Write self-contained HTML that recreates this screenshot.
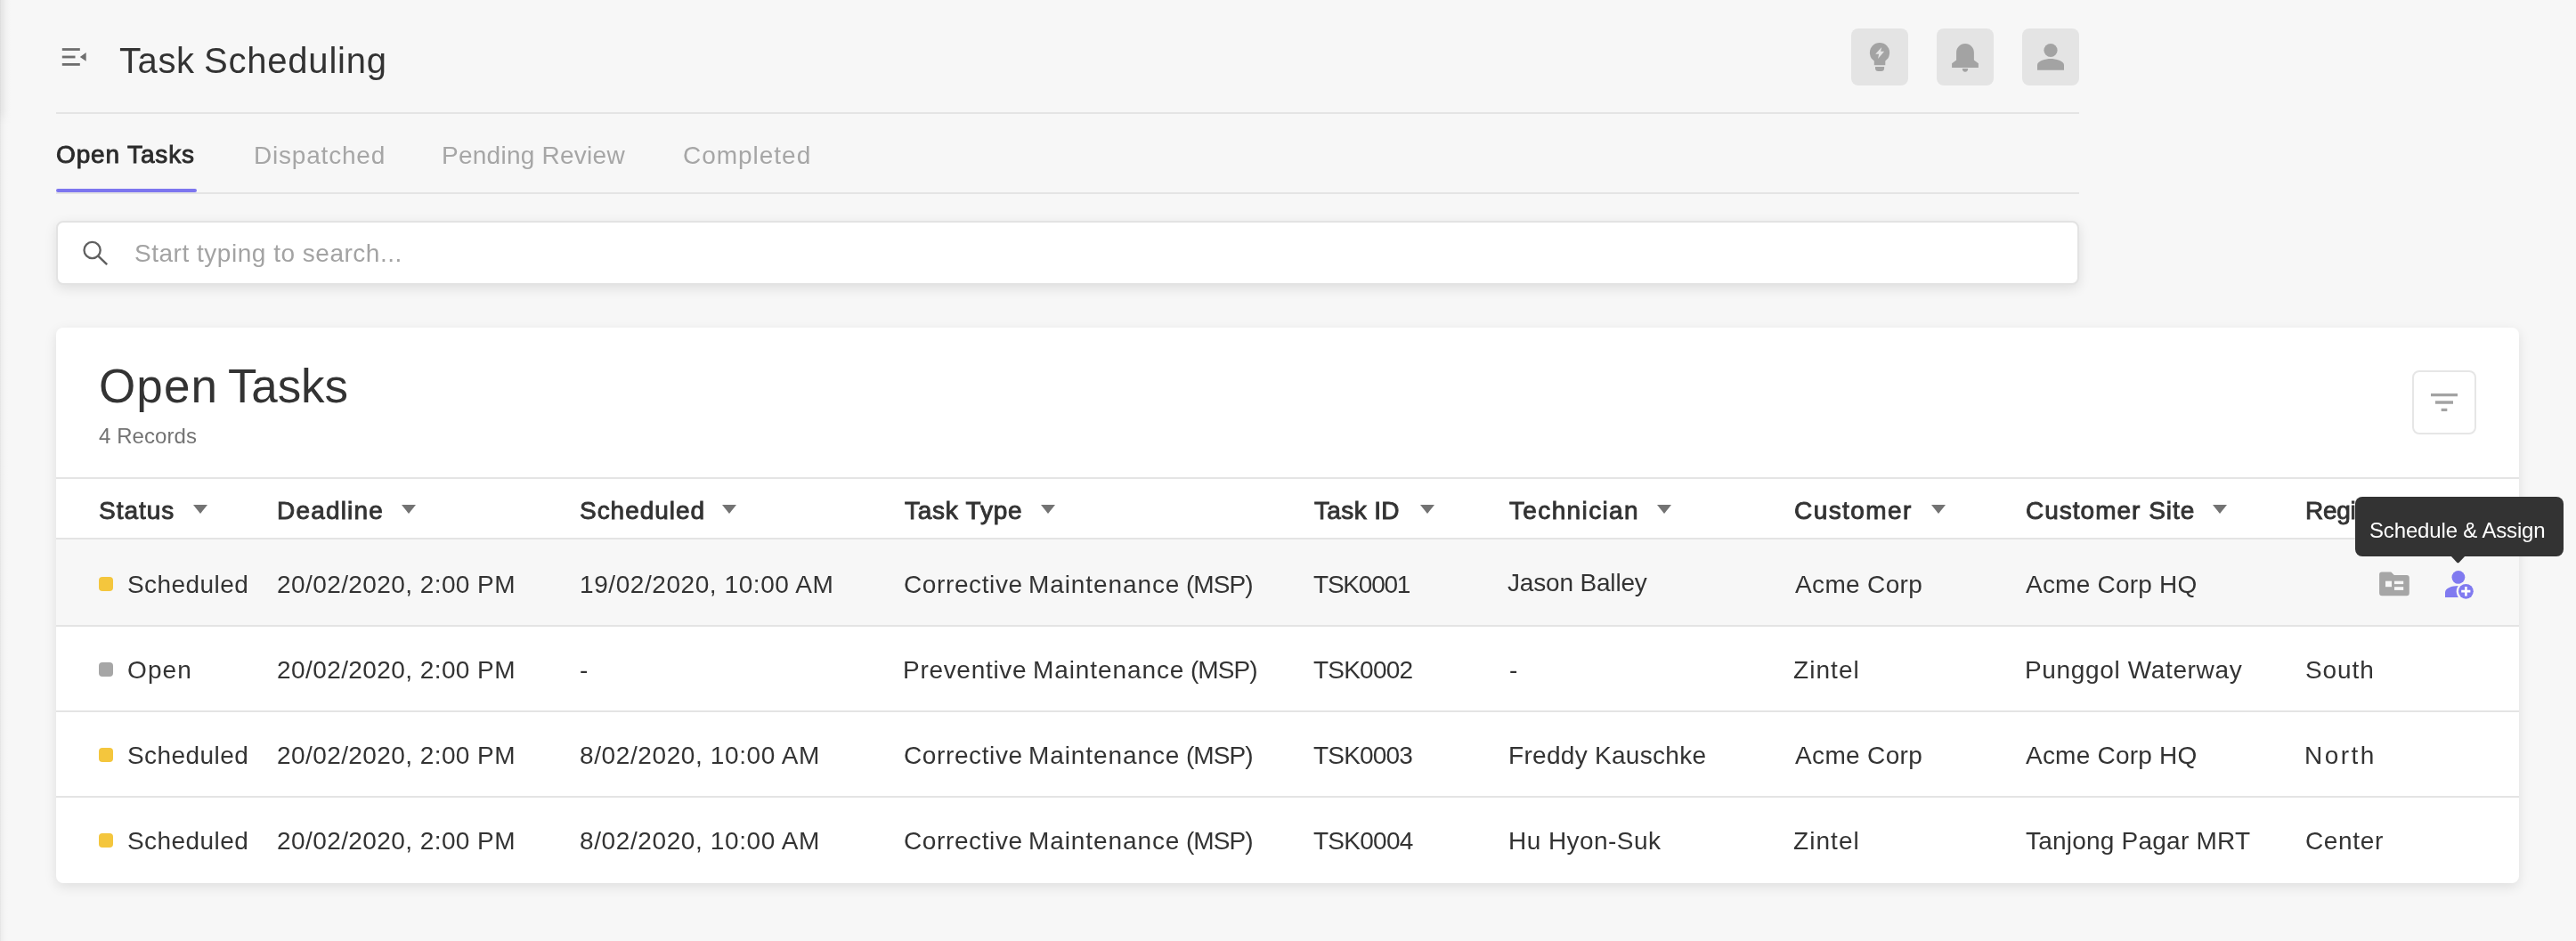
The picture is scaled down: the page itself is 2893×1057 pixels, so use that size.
<!DOCTYPE html>
<html><head><meta charset="utf-8"><title>Task Scheduling</title>
<style>
html,body{margin:0;padding:0}
body{width:2893px;height:1057px;background:#f7f7f7;position:relative;overflow:hidden;font-family:"Liberation Sans",sans-serif;color:#333}
.a{position:absolute;display:block}
.t{position:absolute;white-space:pre;display:block;will-change:transform}
.ib{position:absolute;top:32px;width:64px;height:64px;border-radius:8px;background:#e4e4e4}
.hl{position:absolute;left:63px;width:2272px;height:2px;background:#e4e4e4}
.rl{position:absolute;left:0;width:2766px;height:2px;background:#e4e4e4}
</style></head><body>

<div class="a" style="left:0;top:0;width:12px;height:1057px;background:linear-gradient(to right,#e3e3e3 0,#eeeeee 1.5px,#f2f2f2 4px,#f5f5f5 6px,#f7f7f7 9px)"></div>
<div class="a" style="left:0;top:0;width:12px;height:140px;background:linear-gradient(to right,#dbdbdb 0,#e6e6e6 1.5px,#eaeaea 4px,#f0f0f0 6px,#f4f4f4 9px,#f7f7f7 12px);-webkit-mask-image:linear-gradient(to bottom,#000 0,#000 124px,transparent 139px);mask-image:linear-gradient(to bottom,#000 0,#000 124px,transparent 139px)"></div>
<svg class="a" style="left:60px;top:44px" width="48" height="40" viewBox="60 44 48 40"><g fill="#6e6e6e"><rect x="69.8" y="54.1" width="20" height="2.8"/><rect x="69.8" y="62.6" width="14.7" height="2.8"/><rect x="69.8" y="71" width="20" height="2.8"/><path d="M96.7 59.1V68.7L89.8 63.9Z"/></g></svg>
<div class="ib" style="left:2079px"></div><div class="ib" style="left:2175px"></div><div class="ib" style="left:2271px"></div>
<svg class="a" style="left:2079px;top:32px" width="256" height="64" viewBox="2079 32 256 64">
 <g fill="#a3a3a3">
  <circle cx="2111" cy="59.2" r="11.1"/>
  <rect x="2104.8" y="62" width="12.5" height="11.2"/>
  <path d="M2106 75.1H2116.1V76.5A3.5 3.5 0 0 1 2112.6 80H2109.5A3.5 3.5 0 0 1 2106 76.5Z"/>
  <path d="M2207 48.9C2212.6 48.9 2216.9 53.3 2216.9 59V67.5L2221.9 71.2V75.9H2192.1V71.2L2197.1 67.5V59C2197.1 53.3 2201.4 48.9 2207 48.9Z"/>
  <path d="M2203.8 77.1H2210.2A3.2 3.7 0 0 1 2203.8 77.1Z"/>
  <circle cx="2303" cy="56.5" r="7.6"/>
  <path d="M2288 78.8V73C2288 68.3 2297.5 66 2303 66S2318 68.3 2318 73V78.8Z"/>
 </g>
 <path d="M2113.2 53L2106.2 60.8H2110.1L2109.1 66L2116.1 57.8H2112.1Z" fill="#e4e4e4"/>
</svg>
<div class="hl" style="top:126px"></div>
<div class="hl" style="top:216px"></div>
<div class="a" style="left:63px;top:212px;width:158px;height:4px;border-radius:2px;background:#7d76ef"></div>
<div class="a" style="left:63px;top:248px;width:2268px;height:68px;border:2px solid #e3e3e3;border-radius:8px;background:#fff;box-shadow:0 4px 14px rgba(0,0,0,0.1)"></div>
<svg class="a" style="left:90px;top:268px" width="34" height="34" viewBox="90 268 34 34"><circle cx="103.6" cy="281" r="9.1" fill="none" stroke="#606060" stroke-width="2.3"/><path d="M110.3 287.7L120.2 297.2" stroke="#606060" stroke-width="2.5" stroke-linecap="butt"/></svg>

<div class="a" id="card" style="left:63px;top:368px;width:2766px;height:624px;border-radius:8px;background:#fff;box-shadow:0 4px 14px rgba(0,0,0,0.1)">
 <div class="rl" style="top:168px"></div>
 <div class="rl" style="top:236px"></div>
 <div class="a" style="left:0;top:238px;width:2766px;height:96px;background:#f7f7f7"></div>
 <div class="rl" style="top:334px"></div>
 <div class="rl" style="top:430px"></div>
 <div class="rl" style="top:526px"></div>
 <div class="a" style="left:2646px;top:48px;width:68px;height:68px;border:2px solid #e6e6e6;border-radius:8px;background:#fff"></div>
 <svg class="a" style="left:2662px;top:64px" width="40" height="40" viewBox="0 0 24 24"><path d="M10 18h4v-2h-4v2zM3 6v2h18V6H3zm3 7h12v-2H6v2z" fill="#a3a3a3"/></svg>
</div>
<svg class="a" style="left:217px;top:567px" width="16" height="10" viewBox="0 0 16 10"><path d="M0 0H16L8 10Z" fill="#737373"/></svg><svg class="a" style="left:451.3px;top:567px" width="16" height="10" viewBox="0 0 16 10"><path d="M0 0H16L8 10Z" fill="#737373"/></svg><svg class="a" style="left:811.2px;top:567px" width="16" height="10" viewBox="0 0 16 10"><path d="M0 0H16L8 10Z" fill="#737373"/></svg><svg class="a" style="left:1169px;top:567px" width="16" height="10" viewBox="0 0 16 10"><path d="M0 0H16L8 10Z" fill="#737373"/></svg><svg class="a" style="left:1595px;top:567px" width="16" height="10" viewBox="0 0 16 10"><path d="M0 0H16L8 10Z" fill="#737373"/></svg><svg class="a" style="left:1861.4px;top:567px" width="16" height="10" viewBox="0 0 16 10"><path d="M0 0H16L8 10Z" fill="#737373"/></svg><svg class="a" style="left:2168.8px;top:567px" width="16" height="10" viewBox="0 0 16 10"><path d="M0 0H16L8 10Z" fill="#737373"/></svg><svg class="a" style="left:2485px;top:567px" width="16" height="10" viewBox="0 0 16 10"><path d="M0 0H16L8 10Z" fill="#737373"/></svg><div class="a" style="left:111px;top:648px;width:16px;height:16px;border-radius:4px;background:#f4c63d"></div><div class="a" style="left:111px;top:744px;width:16px;height:16px;border-radius:4px;background:#a6a6a6"></div><div class="a" style="left:111px;top:840px;width:16px;height:16px;border-radius:4px;background:#f4c63d"></div><div class="a" style="left:111px;top:936px;width:16px;height:16px;border-radius:4px;background:#f4c63d"></div><span class="t" style="left:134.2px;top:48.3px;font-size:40px;line-height:40px;letter-spacing:0.600px;color:#333333;">Task</span>
<span class="t" style="left:228.8px;top:48.3px;font-size:40px;line-height:40px;letter-spacing:0.789px;color:#333333;">Scheduling</span>
<span class="t" style="left:63.0px;top:160.2px;font-size:28px;line-height:28px;letter-spacing:0.856px;color:#2b2b2b;-webkit-text-stroke-width:0.9px;">Open Tasks</span>
<span class="t" style="left:284.9px;top:161.2px;font-size:28px;line-height:28px;letter-spacing:0.800px;color:#a6a6a6;">Dispatched</span>
<span class="t" style="left:496.3px;top:161.2px;font-size:28px;line-height:28px;letter-spacing:0.254px;color:#a6a6a6;">Pending Review</span>
<span class="t" style="left:767.0px;top:161.2px;font-size:28px;line-height:28px;letter-spacing:0.975px;color:#a6a6a6;">Completed</span>
<span class="t" style="left:151.1px;top:270.9px;font-size:28px;line-height:28px;letter-spacing:0.517px;color:#a3a3a3;">Start typing to search...</span>
<span class="t" style="left:110.8px;top:407.3px;font-size:53px;line-height:53px;letter-spacing:1.100px;color:#333333;">Open</span>
<span class="t" style="left:256.1px;top:407.3px;font-size:53px;line-height:53px;letter-spacing:-0.150px;color:#333333;">Tasks</span>
<span class="t" style="left:111.0px;top:478.3px;font-size:24px;line-height:24px;letter-spacing:0.075px;color:#737373;">4 Records</span>
<span class="t" style="left:110.7px;top:560.3px;font-size:28px;line-height:28px;letter-spacing:0.960px;color:#333333;-webkit-text-stroke-width:0.9px;">Status</span>
<span class="t" style="left:311.2px;top:560.3px;font-size:28px;line-height:28px;letter-spacing:1.186px;color:#333333;-webkit-text-stroke-width:0.9px;">Deadline</span>
<span class="t" style="left:650.5px;top:560.3px;font-size:28px;line-height:28px;letter-spacing:0.963px;color:#333333;-webkit-text-stroke-width:0.9px;">Scheduled</span>
<span class="t" style="left:1016.0px;top:560.3px;font-size:28px;line-height:28px;letter-spacing:0.750px;color:#333333;-webkit-text-stroke-width:0.9px;">Task Type</span>
<span class="t" style="left:1475.8px;top:560.3px;font-size:28px;line-height:28px;letter-spacing:0.367px;color:#333333;-webkit-text-stroke-width:0.9px;">Task ID</span>
<span class="t" style="left:1695.4px;top:560.3px;font-size:28px;line-height:28px;letter-spacing:1.367px;color:#333333;-webkit-text-stroke-width:0.9px;">Technician</span>
<span class="t" style="left:2015.0px;top:560.3px;font-size:28px;line-height:28px;letter-spacing:1.429px;color:#333333;-webkit-text-stroke-width:0.9px;">Customer</span>
<span class="t" style="left:2275.0px;top:560.3px;font-size:28px;line-height:28px;letter-spacing:1.000px;color:#333333;-webkit-text-stroke-width:0.9px;">Customer Site</span>
<span class="t" style="left:2589.2px;top:560.3px;font-size:28px;line-height:28px;letter-spacing:-0.267px;color:#333333;-webkit-text-stroke-width:0.9px;">Region</span>
<span class="t" style="left:142.9px;top:643.0px;font-size:28px;line-height:28px;letter-spacing:0.425px;color:#333333;">Scheduled</span>
<span class="t" style="left:310.6px;top:643.0px;font-size:28px;line-height:28px;letter-spacing:0.417px;color:#333333;">20/02/2020, 2:00 PM</span>
<span class="t" style="left:650.9px;top:643.0px;font-size:28px;line-height:28px;letter-spacing:0.568px;color:#333333;">19/02/2020, 10:00 AM</span>
<span class="t" style="left:1014.8px;top:643.0px;font-size:28px;line-height:28px;letter-spacing:0.611px;color:#333333;">Corrective</span>
<span class="t" style="left:1155.2px;top:643.0px;font-size:28px;line-height:28px;letter-spacing:0.910px;color:#333333;">Maintenance</span>
<span class="t" style="left:1331.5px;top:643.0px;font-size:28px;line-height:28px;letter-spacing:-0.950px;color:#333333;">(MSP)</span>
<span class="t" style="left:1475.0px;top:643.0px;font-size:28px;line-height:28px;letter-spacing:-1.217px;color:#333333;">TSK0001</span>
<span class="t" style="left:1692.7px;top:641.0px;font-size:28px;line-height:28px;letter-spacing:-0.173px;color:#333333;">Jason Balley</span>
<span class="t" style="left:2015.5px;top:643.0px;font-size:28px;line-height:28px;letter-spacing:0.350px;color:#333333;">Acme Corp</span>
<span class="t" style="left:2275.4px;top:643.0px;font-size:28px;line-height:28px;letter-spacing:0.218px;color:#333333;">Acme Corp HQ</span>
<span class="t" style="left:143.3px;top:739.0px;font-size:28px;line-height:28px;letter-spacing:1.133px;color:#333333;">Open</span>
<span class="t" style="left:310.6px;top:739.0px;font-size:28px;line-height:28px;letter-spacing:0.417px;color:#333333;">20/02/2020, 2:00 PM</span>
<span class="t" style="left:650.8px;top:739.0px;font-size:28px;line-height:28px;letter-spacing:0.000px;color:#333333;">-</span>
<span class="t" style="left:1014.2px;top:739.0px;font-size:28px;line-height:28px;letter-spacing:0.700px;color:#333333;">Preventive</span>
<span class="t" style="left:1160.4px;top:739.0px;font-size:28px;line-height:28px;letter-spacing:0.910px;color:#333333;">Maintenance</span>
<span class="t" style="left:1336.7px;top:739.0px;font-size:28px;line-height:28px;letter-spacing:-0.950px;color:#333333;">(MSP)</span>
<span class="t" style="left:1475.0px;top:739.0px;font-size:28px;line-height:28px;letter-spacing:-0.783px;color:#333333;">TSK0002</span>
<span class="t" style="left:1694.8px;top:739.0px;font-size:28px;line-height:28px;letter-spacing:0.000px;color:#333333;">-</span>
<span class="t" style="left:2014.4px;top:739.0px;font-size:28px;line-height:28px;letter-spacing:1.060px;color:#333333;">Zintel</span>
<span class="t" style="left:2273.9px;top:739.0px;font-size:28px;line-height:28px;letter-spacing:0.647px;color:#333333;">Punggol Waterway</span>
<span class="t" style="left:2588.5px;top:739.0px;font-size:28px;line-height:28px;letter-spacing:0.925px;color:#333333;">South</span>
<span class="t" style="left:142.9px;top:835.0px;font-size:28px;line-height:28px;letter-spacing:0.425px;color:#333333;">Scheduled</span>
<span class="t" style="left:310.6px;top:835.0px;font-size:28px;line-height:28px;letter-spacing:0.417px;color:#333333;">20/02/2020, 2:00 PM</span>
<span class="t" style="left:650.5px;top:835.0px;font-size:28px;line-height:28px;letter-spacing:0.606px;color:#333333;">8/02/2020, 10:00 AM</span>
<span class="t" style="left:1014.8px;top:835.0px;font-size:28px;line-height:28px;letter-spacing:0.611px;color:#333333;">Corrective</span>
<span class="t" style="left:1155.2px;top:835.0px;font-size:28px;line-height:28px;letter-spacing:0.910px;color:#333333;">Maintenance</span>
<span class="t" style="left:1331.5px;top:835.0px;font-size:28px;line-height:28px;letter-spacing:-0.950px;color:#333333;">(MSP)</span>
<span class="t" style="left:1475.0px;top:835.0px;font-size:28px;line-height:28px;letter-spacing:-0.800px;color:#333333;">TSK0003</span>
<span class="t" style="left:1694.0px;top:835.0px;font-size:28px;line-height:28px;letter-spacing:0.300px;color:#333333;">Freddy Kauschke</span>
<span class="t" style="left:2015.5px;top:835.0px;font-size:28px;line-height:28px;letter-spacing:0.350px;color:#333333;">Acme Corp</span>
<span class="t" style="left:2275.4px;top:835.0px;font-size:28px;line-height:28px;letter-spacing:0.218px;color:#333333;">Acme Corp HQ</span>
<span class="t" style="left:2587.5px;top:835.0px;font-size:28px;line-height:28px;letter-spacing:2.450px;color:#333333;">North</span>
<span class="t" style="left:142.9px;top:931.0px;font-size:28px;line-height:28px;letter-spacing:0.425px;color:#333333;">Scheduled</span>
<span class="t" style="left:310.6px;top:931.0px;font-size:28px;line-height:28px;letter-spacing:0.417px;color:#333333;">20/02/2020, 2:00 PM</span>
<span class="t" style="left:650.5px;top:931.0px;font-size:28px;line-height:28px;letter-spacing:0.606px;color:#333333;">8/02/2020, 10:00 AM</span>
<span class="t" style="left:1014.8px;top:931.0px;font-size:28px;line-height:28px;letter-spacing:0.611px;color:#333333;">Corrective</span>
<span class="t" style="left:1155.2px;top:931.0px;font-size:28px;line-height:28px;letter-spacing:0.910px;color:#333333;">Maintenance</span>
<span class="t" style="left:1331.5px;top:931.0px;font-size:28px;line-height:28px;letter-spacing:-0.950px;color:#333333;">(MSP)</span>
<span class="t" style="left:1475.0px;top:931.0px;font-size:28px;line-height:28px;letter-spacing:-0.733px;color:#333333;">TSK0004</span>
<span class="t" style="left:1694.0px;top:931.0px;font-size:28px;line-height:28px;letter-spacing:0.450px;color:#333333;">Hu Hyon-Suk</span>
<span class="t" style="left:2014.4px;top:931.0px;font-size:28px;line-height:28px;letter-spacing:1.060px;color:#333333;">Zintel</span>
<span class="t" style="left:2275.4px;top:931.0px;font-size:28px;line-height:28px;letter-spacing:0.219px;color:#333333;">Tanjong Pagar MRT</span>
<span class="t" style="left:2588.5px;top:931.0px;font-size:28px;line-height:28px;letter-spacing:0.640px;color:#333333;">Center</span>
<svg class="a" style="left:2668px;top:638px" width="120" height="40" viewBox="2668 638 120 40">
 <path d="M2674.9 642.6H2685.3L2688.8 645.9H2702.8A3 3 0 0 1 2705.8 648.9V666.3A3 3 0 0 1 2702.8 669.3H2675.100A3 3 0 0 1 2672.100 666.3V645.4A2.800 2.800 0 0 1 2674.9 642.6Z" fill="#a6a6a6"/>
 <g fill="#f7f7f7"><rect x="2679" y="652.7" width="7" height="6.5"/><rect x="2689" y="652.7" width="10.200" height="3.400"/><rect x="2689" y="659.2" width="10.200" height="3.700"/></g>
 <circle cx="2760.9" cy="648.4" r="7.4" fill="#807af0"/>
 <path d="M2746 670.9V665.4C2746 660.6 2753.500 657.9 2760.9 657.9C2766 657.9 2771 659.2 2774 661.5V670.9Z" fill="#807af0"/>
 <circle cx="2769.4" cy="664.3" r="10.700" fill="#f7f7f7"/>
 <circle cx="2769.4" cy="664.3" r="8.400" fill="#807af0"/>
 <path d="M2764.2 664.2H2774.4M2769.4 659.1V669.4" stroke="#fff" stroke-width="2.700"/>
</svg>
<div class="a" style="left:2645px;top:558px;width:234px;height:66.500px;border-radius:8px;background:#333"></div>
<svg class="a" style="left:2752px;top:624px" width="17" height="9" viewBox="0 0 17 9"><path d="M0 0H17L9.300 8.300H7.700Z" fill="#333"/></svg>
<span class="t" style="left:2661.1px;top:584.1px;font-size:24px;line-height:24px;letter-spacing:-0.156px;color:#ffffff;">Schedule &amp; Assign</span>
</body></html>
